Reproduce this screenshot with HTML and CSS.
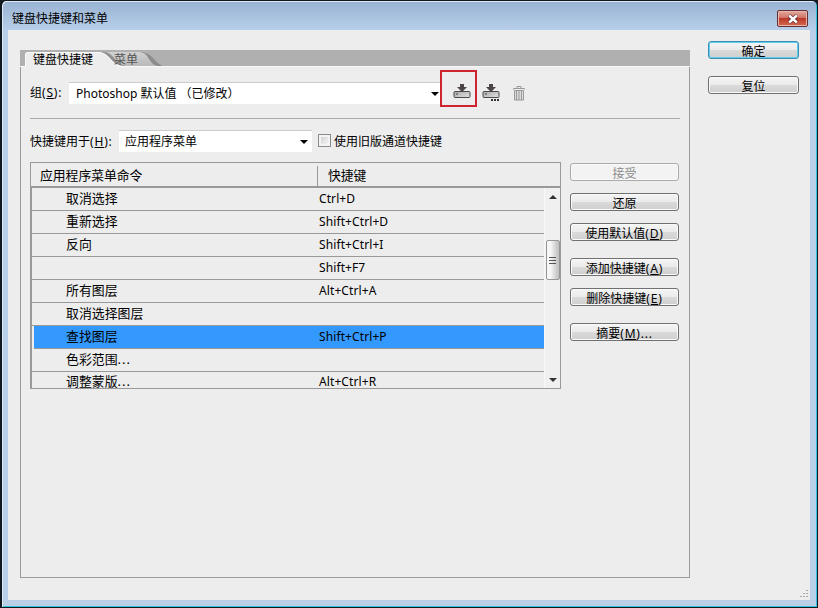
FILE: index.html
```html
<!DOCTYPE html>
<html lang="zh-CN">
<head>
<meta charset="utf-8">
<title>键盘快捷键和菜单</title>
<link rel="stylesheet" href="styles.css">
</head>
<body>
<div class="window">
  <header class="titlebar">
    <h1>键盘快捷键和菜单</h1>
    <button class="close" aria-label="关闭"><svg width="12" height="10" viewBox="0 0 12 10"><path d="M2 1.5L10 8.5M10 1.5L2 8.5" stroke="#5c3030" stroke-width="4"/><path d="M2.2 1.5L9.8 8.5M9.8 1.5L2.2 8.5" stroke="#fff" stroke-width="2.4"/></svg></button>
  </header>
  <div class="client">
    <main class="panel">
      <nav class="tabs">
        <svg class="tabshape" width="160" height="17" viewBox="0 0 160 17">
          <defs><linearGradient id="t" x2="0" y2="1"><stop offset="0" stop-color="#d2d2d2"/><stop offset="1" stop-color="#b8b8b8"/></linearGradient></defs>
          <path d="M88 2H122C132 2 132 13 143 16H88Z" fill="url(#t)"/>
          <path d="M120 2C133 2 134 13 143 16H137C128 13 130 4 120 2Z" fill="#8c8c8c"/>
          <path d="M81 2C96 2 92 12 105 16H95Z" fill="#8f8f8f"/>
          <path d="M0 17V16H5V5Q5 2 8 2H77C91 2 89 14 103 16V17Z" fill="#ededed"/>
          <path d="M0 16.500H5.500V5Q5.500 2.500 8 2.500H77C91 2.500 89 14 101 16.500H160" fill="none" stroke="#fafafa"/>
        </svg>
        <span class="tab">键盘快捷键</span><span class="tab off">菜单</span>
      </nav>
      <section class="setrow">
        <label>组<span class="mn">(<u>S</u>):</span></label>
        <div class="select set"><span>Photoshop 默认值 （已修改）</span><i class="arrow"></i></div>
        <div class="marked">
          <svg width="18" height="17" viewBox="0 0 18 17"><defs><linearGradient id="d" x2="1" y2="1"><stop offset="0" stop-color="#aaa"/><stop offset="1" stop-color="#e0e0e0"/></linearGradient></defs><rect x="1" y="7.500" width="16" height="6" rx="1" fill="url(#d)" stroke="#494949"/><path d="M7 0H11V3H14L9 8L4 3H7Z" fill="#4b4549"/><path d="M3 10H5" stroke="#444"/></svg>
        </div>
        <svg class="saveas" width="18" height="18" viewBox="0 0 18 18"><rect x="1" y="7.500" width="16" height="6" rx="1" fill="url(#d)" stroke="#494949"/><path d="M7 0H11V3H14L9 8L4 3H7Z" fill="#4b4549"/><path d="M3 10H5" stroke="#444"/><path d="M9 16H17" stroke="#333" stroke-width="2" stroke-dasharray="2 1"/></svg>
        <svg class="trash" width="12" height="15" viewBox="0 0 12 15"><path d="M4 2V.5H8V2M.5 3.500V2.500H11.500V3.500" fill="none" stroke="#999"/><path d="M1.500 4.500H10.500V14H1.500Z" fill="#ddd" stroke="#999"/><path d="M3.500 5V14M6 5V14M8.500 5V14" stroke="#999"/></svg>
      </section>
      <section class="forrow">
        <label>快捷键用于<span class="mn">(<u>H</u>):</span></label>
        <div class="select for"><span>应用程序菜单</span><i class="arrow"></i></div>
        <i class="check"></i><span>使用旧版通道快捷键</span>
      </section>
      <section class="work">
        <div class="table">
          <div class="thead"><span>应用程序菜单命令</span><span class="keyhead">快捷键</span></div>
          <div class="tbody">
            <div class="rows">
              <div class="row"><span>取消选择</span><span>Ctrl+D</span></div>
              <div class="row"><span>重新选择</span><span>Shift+Ctrl+D</span></div>
              <div class="row"><span>反向</span><span>Shift+Ctrl+I</span></div>
              <div class="row"><span></span><span>Shift+F7</span></div>
              <div class="row"><span>所有图层</span><span>Alt+Ctrl+A</span></div>
              <div class="row"><span>取消选择图层</span><span></span></div>
              <div class="row selected"><span>查找图层</span><span>Shift+Ctrl+P</span></div>
              <div class="row"><span>色彩范围<span class="dots">...</span></span><span></span></div>
              <div class="row last"><span>调整蒙版<span class="dots">...</span></span><span>Alt+Ctrl+R</span></div>
            </div>
            <div class="scroll"><i class="up"></i><div class="thumb"><i></i><i></i><i></i></div><i class="down"></i></div>
          </div>
        </div>
        <div class="actions">
          <button class="btn" disabled>接受</button>
          <button class="btn">还原</button>
          <button class="btn">使用默认值<span class="mn">(<u>D</u>)</span></button>
          <button class="btn gap">添加快捷键<span class="mn">(<u>A</u>)</span></button>
          <button class="btn">删除快捷键<span class="mn">(<u>E</u>)</span></button>
          <button class="btn gap">摘要<span class="mn">(<u>M</u>)...</span></button>
        </div>
      </section>
    </main>
    <aside class="side">
      <button class="btn primary">确定</button>
      <button class="btn">复位</button>
    </aside>
    <svg class="grip" width="10" height="10" viewBox="0 0 10 10"><path d="M7 1h2v1h-2zM7 4h2v1h-2zM4 4h2v1h-2zM7 7h2v1h-2zM4 7h2v1h-2zM1 7h2v1h-2z" fill="#aaa"/></svg>
  </div>
</div>
</body>
</html>
```
FILE: styles.css
```css
* { box-sizing: border-box; }
body {
  margin: 0;
  background: #151b22;
  color: #000;
  font: 12px/16px "Noto Sans", "Noto Sans CJK SC", sans-serif;
}
button { font: inherit; padding: 0; margin: 0; }
u { text-underline-offset: 1px; text-decoration-thickness: 1px; }
.mn { letter-spacing: .8px; }
.window {
  width: 818px;
  height: 608px;
  padding: 0 7px 6px 6px;
  border: 1px solid #101820;
  border-left-width: 2px;
  border-radius: 6px 6px 0 0;
  background: linear-gradient(#98b2d2 0, #b8d0ea 30px, #bad0e8 100%);
  box-shadow: inset 1px 1px #dfeaf5, inset -1px -1px #35c2dc;
}
.titlebar {
  display: flex;
  justify-content: space-between;
  height: 29px;
  padding: 9px 0 0 4px;
}
h1 { margin: 1px 0 0; font-size: 12px; font-weight: 400; line-height: 16px; }
.close {
  display: flex;
  align-items: center;
  justify-content: center;
  width: 31px;
  height: 17px;
  margin-right: 2px;
  border: 1px solid #642f35;
  border-radius: 2px;
  background: linear-gradient(#e3aaa0, #d17366 45%, #b93828 50%, #d46a50);
  box-shadow: inset 0 0 0 1px #e8b5ab;
}
.client {
  position: relative;
  display: flex;
  height: 570px;
  background: #ededed;
}
.panel {
  width: 670px;
  height: 528px;
  margin: 20px 0 0 12px;
  border: 1px solid #9a9a9a;
  border-top: 0;
}
.tabs {
  position: relative;
  display: flex;
  height: 17px;
  margin: 0 -1px;
  background: #b0b0b0;
  border-bottom: 1px solid #fafafa;
}
.tabshape { position: absolute; left: 0; top: 0; }
.tab { position: relative; padding: 3px 0 0 13px; white-space: nowrap; line-height: 14px; }
.tab.off { padding-left: 21px; color: #555; }
.setrow { display: flex; height: 52px; margin: 0 9px; padding-top: 15px; border-bottom: 1px solid #aaa; }
.setrow label { width: 39px; padding-top: 3px; white-space: nowrap; }
.select {
  display: flex;
  align-items: center;
  justify-content: space-between;
  height: 22px;
  background: #fff;
  border-top: 1px solid #ccc;
  white-space: nowrap;
}
.set { width: 371px; padding: 1px 1px 0 7px; }
.arrow { border: 4px solid transparent; border-top-color: #000; border-bottom: 0; }
.marked { width: 37px; height: 37px; margin-top: -12px; border: 2px solid #ce2430; padding: 12px 0 0 11px; }
.marked svg { display: block; }
.saveas { margin: 2px 0 0 5px; }
.trash { margin: 4px 0 0 13px; }
.forrow { display: flex; height: 22px; margin: 11px 9px 0; }
.forrow label { width: 89px; padding-top: 4px; white-space: nowrap; }
.for { width: 193px; padding: 1px 4px 0 6px; }
.check {
  width: 13px;
  height: 13px;
  margin: 4px 3px 0 6px;
  border: 1px solid #8b8b8b;
  background: linear-gradient(135deg, #c8c8c8, #fff);
  box-shadow: inset 0 0 0 2px #f4f4f4;
}
.forrow > span { padding-top: 4px; }
.work { display: flex; margin: 10px 9px 0; }
.table { width: 531px; height: 227px; border: 1px solid #999; }
.thead { display: flex; height: 25px; border-bottom: 2px solid #999; font-size: 12.800px; }
.thead span { width: 286px; padding: 4px 0 0 9px; }
.thead .keyhead { width: 242px; height: 20px; margin-top: 3px; padding: 1px 0 0 10px; border-left: 1px solid #999; }
.tbody { display: flex; height: 200px; }
.rows { width: 513px; border-left: 1px solid #999; }
.row { display: flex; height: 23px; border-bottom: 1px solid #999; padding: 2px 0 0 34px; font-size: 12.900px; }
.row > span:first-child { width: 253px; }
.row > span:last-child { padding-top: 1px; font-size: 12px; letter-spacing: .1px; }
.dots { letter-spacing: 1px; }
.selected { margin-left: 2px; padding-left: 32px; background: #3399ff; }
.last { height: 16px; border-bottom: 0; padding-top: 2px; line-height: 14px; }
.scroll { display: flex; flex-direction: column; align-items: center; width: 16px; background: #f0f0f0; border-left: 1px solid #f8f8f8; padding-top: 7px; }
.up { border: 4px solid transparent; border-bottom-color: #333; border-top: 0; }
.down { margin-top: 98px; border: 4px solid transparent; border-top-color: #333; border-bottom: 0; }
.thumb {
  display: flex;
  flex-direction: column;
  align-items: center;
  justify-content: center;
  gap: 2px;
  width: 14px;
  height: 40px;
  margin-top: 41px;
  flex: none;
  border: 1px solid #979797;
  border-radius: 2px;
  background: linear-gradient(90deg, #f6f6f6 30%, #d4d4d4 70%, #bebebe);
}
.thumb i { width: 7px; height: 1px; background: #555; }
.actions { display: flex; flex-direction: column; gap: 12px; margin: 1px 0 0 9px; }
.btn {
  display: flex;
  align-items: center;
  justify-content: center;
  width: 109px;
  height: 18px;
  padding-top: 3px;
  border: 1px solid #707070;
  border-radius: 3px;
  color: #000;
  line-height: 14px;
  white-space: pre;
  background: linear-gradient(#f4f4f4, #ebebeb 48%, #dadada 52%, #cfcfcf);
  box-shadow: inset 0 0 0 1px #fafafa;
}
.btn:disabled { border-color: #aaa; background: #f3f3f3; color: #8c8c8c; }
.gap { margin-top: 5px; }
.side { display: flex; flex-direction: column; gap: 17px; margin: 11px 0 0 18px; }
.side .btn { width: 91px; }
.side .primary { border-color: #3c8fb0; box-shadow: inset 0 0 0 1px #5fcdf0; }
.grip { position: absolute; right: 1px; bottom: 1px; }
```
